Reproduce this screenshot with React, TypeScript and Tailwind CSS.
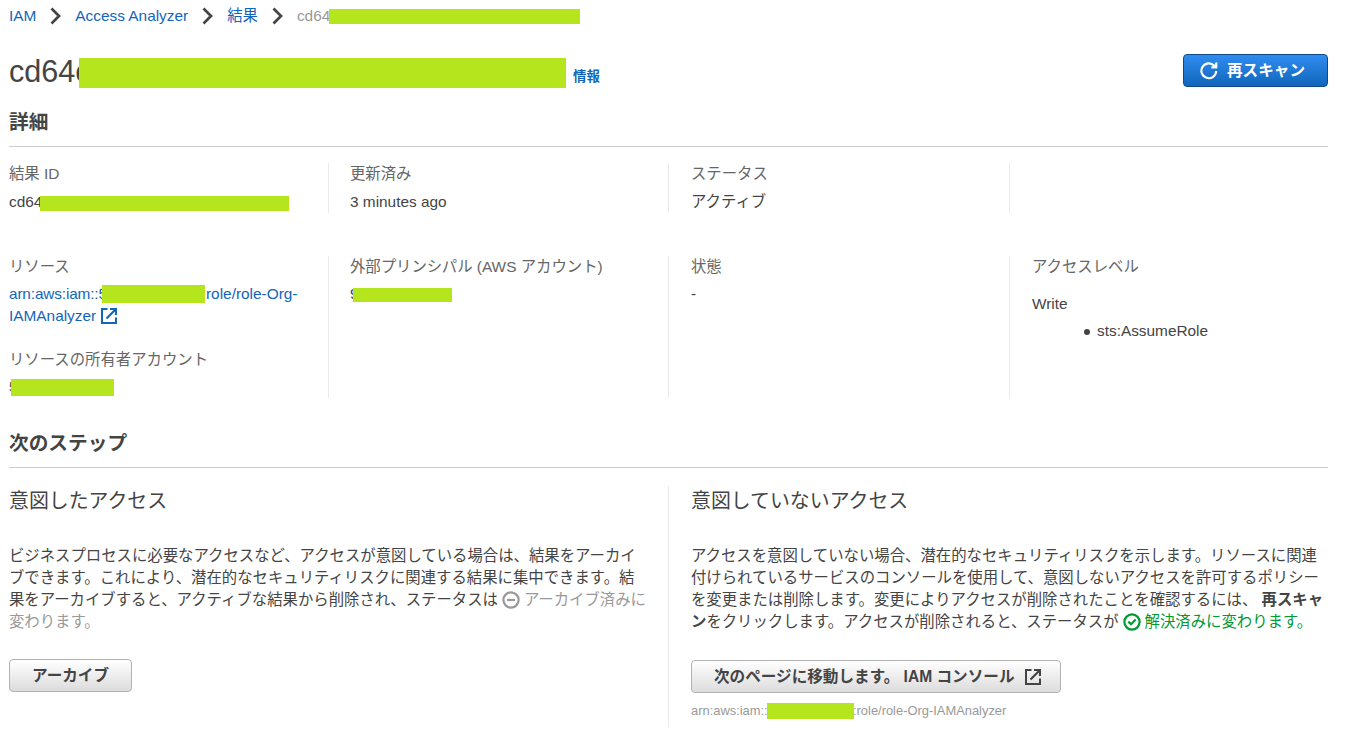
import type { ReactNode } from 'react';

const FONT = "font-['Liberation_Sans','Noto_Sans_CJK_JP',sans-serif]";

function Mask({ className }: { className: string }) {
  return <span className={`inline-block shrink-0 bg-[#b5e61d] ${className}`} />;
}

function Chevron() {
  return (
    <svg className="mx-3.5 shrink-0" width="11" height="18" viewBox="0 0 11 18" fill="none">
      <path d="M1.5 1.5L9 9L1.5 16.5" stroke="#444" strokeWidth="2.7" />
    </svg>
  );
}

function ExternalIcon({ className = '' }: { className?: string }) {
  return (
    <svg className={`inline-block shrink-0 ${className}`} width="16" height="16" viewBox="0 0 16 16" fill="none" stroke="currentColor" strokeWidth="2">
      <path d="M6.5 1H1v14h14V9.5" />
      <path d="M9 1h6v6M14.5 1.5L5.5 10.5" strokeWidth="2.2" />
    </svg>
  );
}

function RefreshIcon() {
  return (
    <svg className="shrink-0" width="18" height="18" viewBox="0 0 18 18" fill="none" stroke="currentColor" strokeWidth="2.1">
      <path d="M14.2 3.7A7.4 7.4 0 1 0 16.2 9" />
      <path d="M17.2 0v6.2H11zM15.2 4.2L12.5 2" fill="currentColor" stroke="none" />
      <path d="M16.2 0.5v4.7h-4.7" strokeWidth="2" />
    </svg>
  );
}

function MinusCircle() {
  return (
    <svg className="inline-block -mt-0.5 mx-1 align-middle" width="18" height="18" viewBox="0 0 18 18" fill="none" stroke="currentColor" strokeWidth="2.2">
      <circle cx="9" cy="9" r="7.6" />
      <path d="M5 9h8" />
    </svg>
  );
}

function CheckCircle() {
  return (
    <svg className="inline-block -mt-0.5 mx-1 align-middle" width="18" height="18" viewBox="0 0 18 18" fill="none" stroke="currentColor" strokeWidth="2.2">
      <circle cx="9" cy="9" r="7.6" />
      <path d="M5.3 8.6L8.1 11.3L12.7 6.6" />
    </svg>
  );
}

function SectionTitle({ children }: { children: ReactNode }) {
  return (
    <h2 className="flex h-[50px] items-center border-b border-[#ccc] text-[19.7px] font-bold">
      {children}
    </h2>
  );
}

function Label({ children }: { children: ReactNode }) {
  return <div className="flex h-[22px] items-center text-[#666]">{children}</div>;
}

const GRID = 'grid grid-cols-[320px_340px_341px_1fr]';
const GRAY_BUTTON =
  'flex h-[33px] items-center rounded border border-[#b3b3b3] bg-linear-to-b from-white to-[#dcdcdc] text-[15.6px] font-bold';

export default function App() {
  return (
    <div className={`${FONT} h-[741px] w-[1360px] overflow-hidden whitespace-nowrap bg-white pl-[9px] pr-8 text-[15.38px] leading-[22px] text-[#444]`}>
      <nav className="flex h-8 items-center text-[#1166bb]">
        <a>IAM</a>
        <Chevron />
        <a>Access Analyzer</a>
        <Chevron />
        <a>結果</a>
        <Chevron />
        <span className="w-8 text-[#999]">cd64</span>
        <Mask className="h-[15px] w-[251px]" />
      </nav>

      <header className="flex h-[65px] items-center justify-between">
        <div className="flex items-center">
          <h1 className="mt-3 -mb-px w-[70px] text-[30.6px] leading-[40px]">cd64c</h1>
          <Mask className="mt-[17px] h-[30px] w-[487px]" />
          <a className="ml-[7px] mt-6 text-[13.4px] font-bold text-[#1166bb]">情報</a>
        </div>
        <button className="mt-3 flex h-[33px] w-[145px] items-center gap-[9px] rounded border border-[#0f4a87] bg-linear-to-b from-[#2e8df0] to-[#1166bb] pl-4 text-[15.6px] font-bold text-white">
          <RefreshIcon />
          再スキャン
        </button>
      </header>

      <SectionTitle>詳細</SectionTitle>

      <div className={`${GRID} mt-4 h-[49px]`}>
        <div className="border-r border-[#eaeaea]">
          <Label>結果 ID</Label>
          <div className="mt-1.5 flex h-[22px] items-center">
            <span className="w-[31px]">cd64</span>
            <Mask className="mt-[3px] h-[15px] w-[249px]" />
          </div>
        </div>
        <div className="border-r border-[#eaeaea] pl-[21px]">
          <Label>更新済み</Label>
          <div className="mt-1.5">3 minutes ago</div>
        </div>
        <div className="border-r border-[#eaeaea] pl-[22px]">
          <Label>ステータス</Label>
          <div className="mt-1.5">アクティブ</div>
        </div>
      </div>

      <div className={`${GRID} mt-11 h-[142px]`}>
        <div className="border-r border-[#eaeaea]">
          <Label>リソース</Label>
          <div className="mt-[5px] text-[#1166bb]">
            <div className="flex h-[22px] items-center">
              <span className="w-[93px] tracking-[-0.15px]">arn:aws:iam::5</span>
              <Mask className="h-[18px] w-[103px]" />
              <span className="ml-px">role/role-Org-</span>
            </div>
            <div className="flex h-[22px] items-center">
              IAMAnalyzer
              <ExternalIcon className="ml-[5px]" />
            </div>
          </div>
          <div className="mt-[22px]">
            <Label>リソースの所有者アカウント</Label>
          </div>
          <div className="mt-[5px] flex h-[22px] items-center">
            <span className="w-[2px]">5</span>
            <Mask className="h-[17px] w-[103px]" />
          </div>
        </div>
        <div className="border-r border-[#eaeaea] pl-[21px]">
          <Label>外部プリンシパル (AWS アカウント)</Label>
          <div className="mt-[5px] flex h-[22px] items-center">
            <span className="w-[3px]">9</span>
            <Mask className="mt-[2px] h-[14px] w-[99px]" />
          </div>
        </div>
        <div className="border-r border-[#eaeaea] pl-[22px]">
          <Label>状態</Label>
          <div className="mt-[5px]">-</div>
        </div>
        <div className="pl-[22px]">
          <Label>アクセスレベル</Label>
          <div className="mt-[15px]">Write</div>
          <ul className="mt-[5px] flex items-center pl-[52px]">
            <li className="flex items-center">
              <span className="mr-[7px] mt-0.5 size-[6px] rounded-full bg-[#444]" />
              sts:AssumeRole
            </li>
          </ul>
        </div>
      </div>

      <div className="mt-5">
        <SectionTitle>次のステップ</SectionTitle>
      </div>

      <div className="mt-[18px] grid h-[241px] grid-cols-[660px_1fr]">
        <section className="border-r border-[#eaeaea]">
          <h3 className="h-[30px] text-[19.9px] leading-[30px]">意図したアクセス</h3>
          <p className="mt-[29px]">
            ビジネスプロセスに必要なアクセスなど、アクセスが意図している場合は、結果をアーカイ
            <br />
            ブできます。これにより、潜在的なセキュリティリスクに関連する結果に集中できます。結
            <br />
            果をアーカイブすると、アクティブな結果から削除され、ステータスは
            <span className="text-[#999]">
              <MinusCircle />
              アーカイブ済みに
              <br />
              変わります。
            </span>
          </p>
          <button className={`${GRAY_BUTTON} mt-[26px] w-[123px] justify-center`}>アーカイブ</button>
        </section>

        <section className="pl-[22px]">
          <h3 className="h-[30px] text-[19.9px] leading-[30px]">意図していないアクセス</h3>
          <p className="mt-[29px]">
            アクセスを意図していない場合、潜在的なセキュリティリスクを示します。リソースに関連
            <br />
            付けられているサービスのコンソールを使用して、意図しないアクセスを許可するポリシー
            <br />
            を変更または削除します。変更によりアクセスが削除されたことを確認するには、 <b>再スキャ</b>
            <br />
            <b>ン</b>をクリックします。アクセスが削除されると、ステータスが
            <span className="text-[#009933]">
              <CheckCircle />
              解決済みに変わります。
            </span>
          </p>
          <button className={`${GRAY_BUTTON} mt-[27px] w-[370px] pl-[22px]`}>
            次のページに移動します。 IAM コンソール
            <ExternalIcon className="ml-[11px]" />
          </button>
          <div className="mt-[7px] flex h-[22px] items-center text-[12.9px] text-[#999]">
            <span className="w-[76px]">arn:aws:iam::</span>
            <Mask className="h-4 w-[87px]" />
            <span className="-ml-px">:role/role-Org-IAMAnalyzer</span>
          </div>
        </section>
      </div>
    </div>
  );
}
